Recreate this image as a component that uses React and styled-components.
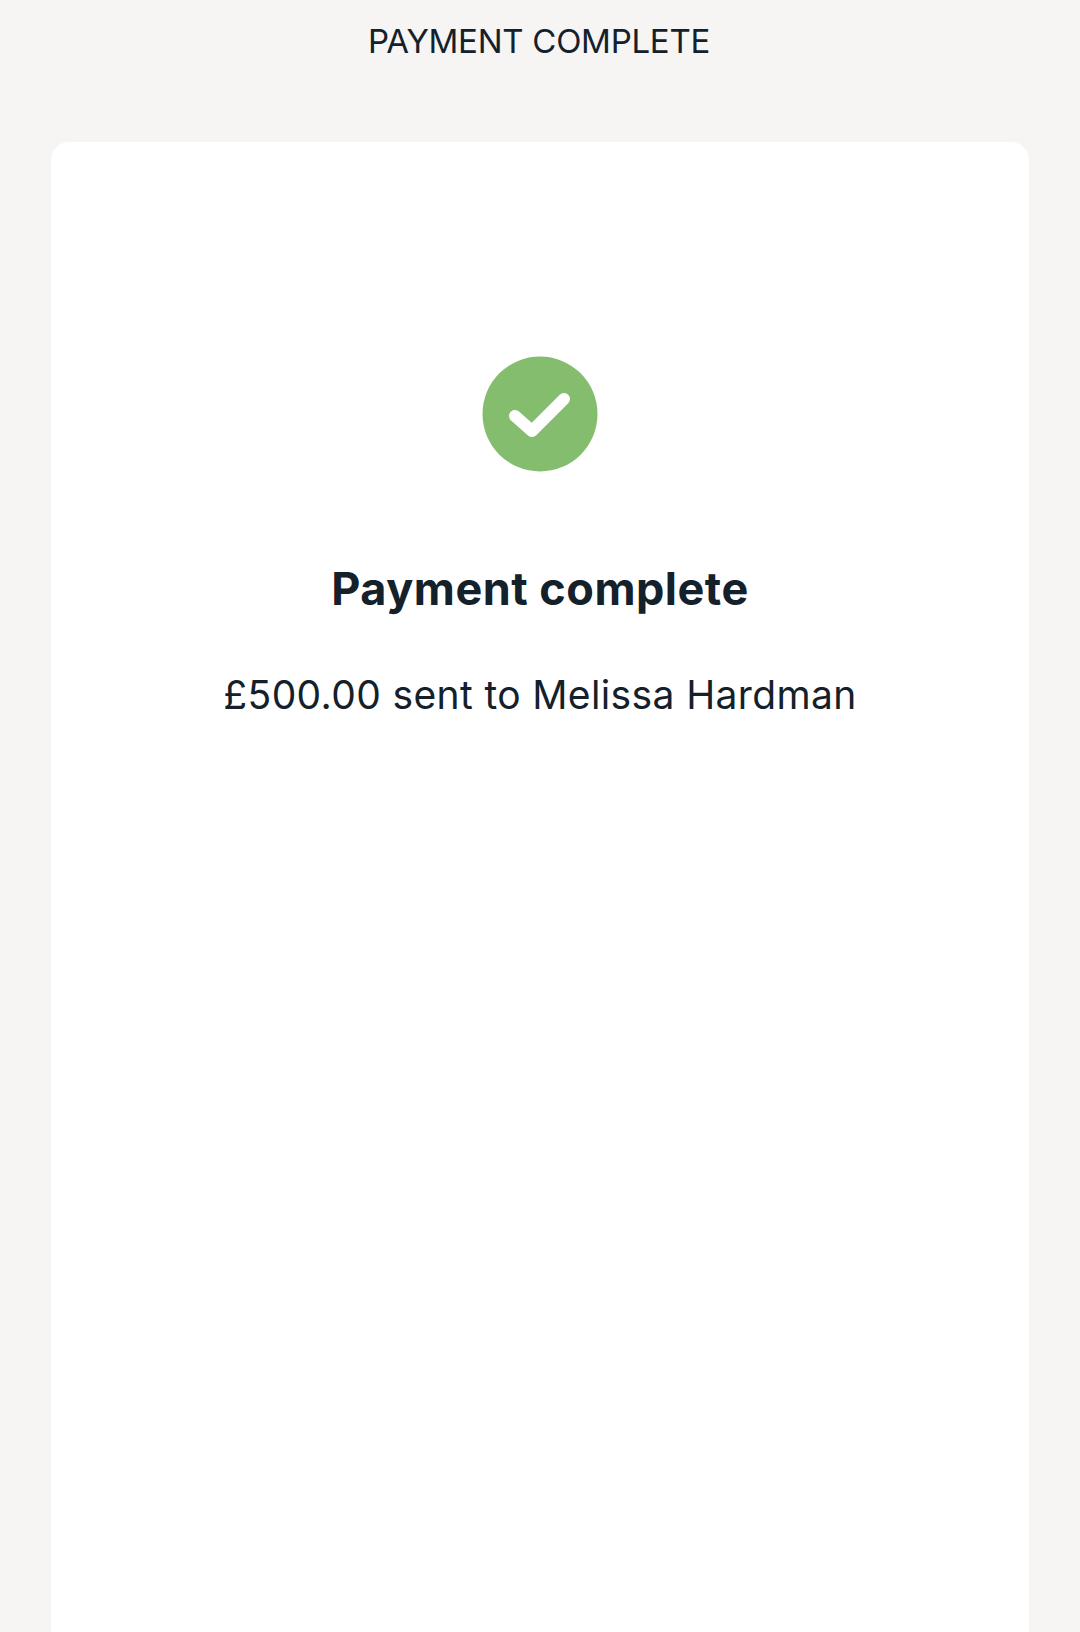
import React from "react";
import styled, { createGlobalStyle } from "styled-components";

const Global = createGlobalStyle`
  html, body { margin: 0; padding: 0; background: #f6f5f3; }
  body { font-family: Inter, "Liberation Sans", sans-serif; color: #14212b; }
`;

const Page = styled.div`
  width: 1080px;
  height: 1632px;
  overflow: hidden;
  display: flex;
  flex-direction: column;
  background: #f6f5f3;
`;

const TopBar = styled.header`
  height: 142px;
  flex: none;
  box-sizing: border-box;
  padding-top: 21px;
  padding-right: 2px;
  text-align: center;
  font-size: 33px;
  line-height: 40px;
  font-weight: 400;
  letter-spacing: -0.27px;
`;

const Card = styled.main`
  flex: 1;
  margin: 0 51px;
  background: #ffffff;
  border-radius: 18px 18px 0 0;
  display: flex;
  flex-direction: column;
  align-items: center;
  padding-top: 214px;
`;

const Badge = styled.svg`
  display: block;
  width: 116px;
  height: 116px;
`;

const Title = styled.h1`
  margin: 91px 0 0;
  font-size: 45px;
  line-height: 52px;
  font-weight: 700;
  letter-spacing: 0.5px;
`;

const Subtitle = styled.p`
  margin: 56px 0 0;
  font-size: 39px;
  line-height: 48px;
  font-weight: 400;
  letter-spacing: 0.37px;
`;

export default function App() {
  return (
    <Page>
      <Global />
      <TopBar>PAYMENT COMPLETE</TopBar>
      <Card>
        <Badge viewBox="0 0 116 116" aria-hidden="true">
          <circle cx="58" cy="58" r="57.5" fill="#85bd6e" />
          <path d="M33 60 L50 75 L82 43" fill="none" stroke="#fff" strokeWidth="12" strokeLinecap="round" strokeLinejoin="round" />
        </Badge>
        <Title>Payment complete</Title>
        <Subtitle>£500.00 sent to Melissa Hardman</Subtitle>
      </Card>
    </Page>
  );
}
